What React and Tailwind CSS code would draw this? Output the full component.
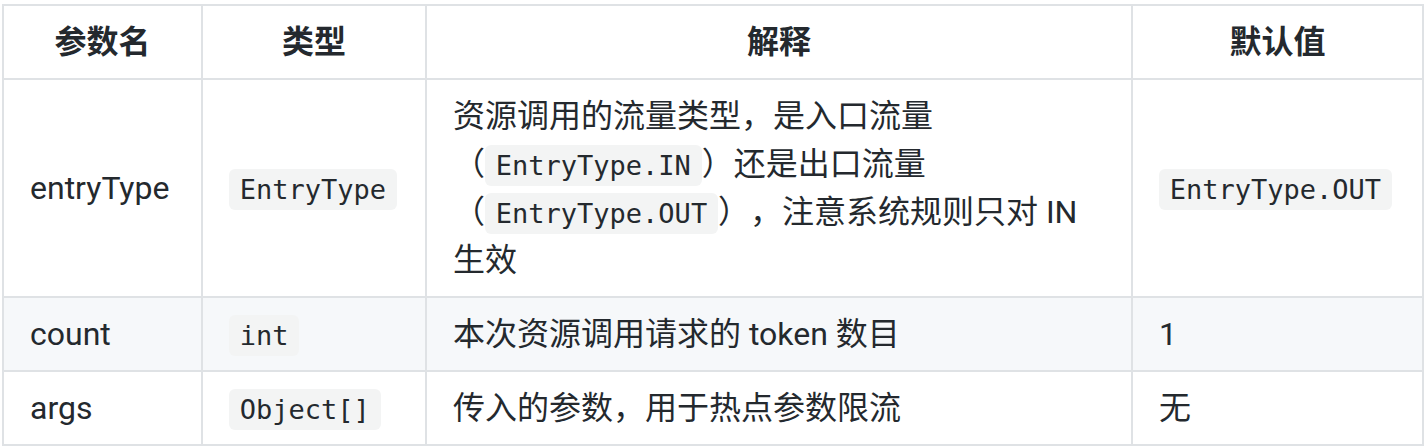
const rows = [
  {
    name: 'entryType',
    type: 'EntryType',
    desc: (
      <>
        资源调用的流量类型，是入口流量
        <br />
        （<Code>EntryType.IN</Code>）还是出口流量
        <br />
        （<Code>EntryType.OUT</Code>），注意系统规则只对 IN
        <br />
        生效
      </>
    ),
    def: <Code>EntryType.OUT</Code>,
  },
  { name: 'count', type: 'int', desc: '本次资源调用请求的 token 数目', def: '1' },
  { name: 'args', type: 'Object[]', desc: '传入的参数，用于热点参数限流', def: '无' },
];

function Code({ children }) {
  return (
    <code className="rounded-[6px] bg-[#f3f4f4] px-[0.4em] py-[0.2em] text-[27px] leading-none font-['DejaVu_Sans_Mono',monospace]">
      {children}
    </code>
  );
}

export default function App() {
  const th = 'border-2 border-[#dfe2e5] px-[26px] py-[12px] text-center font-bold';
  const td = 'border-2 border-[#dfe2e5] px-[26px] py-[12px] align-middle';

  return (
    <div className="bg-white pl-[2px] pt-[4px] w-[1424px] h-[448px] font-['Roboto','Noto_Sans_CJK_SC',sans-serif] text-[32px] leading-[48px] text-[#24292e] [text-spacing-trim:space-all]">
      <table className="w-[1420px] table-fixed border-collapse">
        <colgroup>
          <col className="w-[199px]" />
          <col className="w-[224px]" />
          <col className="w-[706px]" />
          <col className="w-[291px]" />
        </colgroup>
        <thead>
          <tr className="bg-white">
            <th className={th}>参数名</th>
            <th className={th}>类型</th>
            <th className={th}>解释</th>
            <th className={th}>默认值</th>
          </tr>
        </thead>
        <tbody>
          {rows.map((r, i) => (
            <tr key={r.name} className={i % 2 === 1 ? 'bg-[#f6f8fa]' : 'bg-white'}>
              <td className={td}>{r.name}</td>
              <td className={td}>
                <Code>{r.type}</Code>
              </td>
              <td className={td}>{r.desc}</td>
              <td className={td}>{r.def}</td>
            </tr>
          ))}
        </tbody>
      </table>
    </div>
  );
}
